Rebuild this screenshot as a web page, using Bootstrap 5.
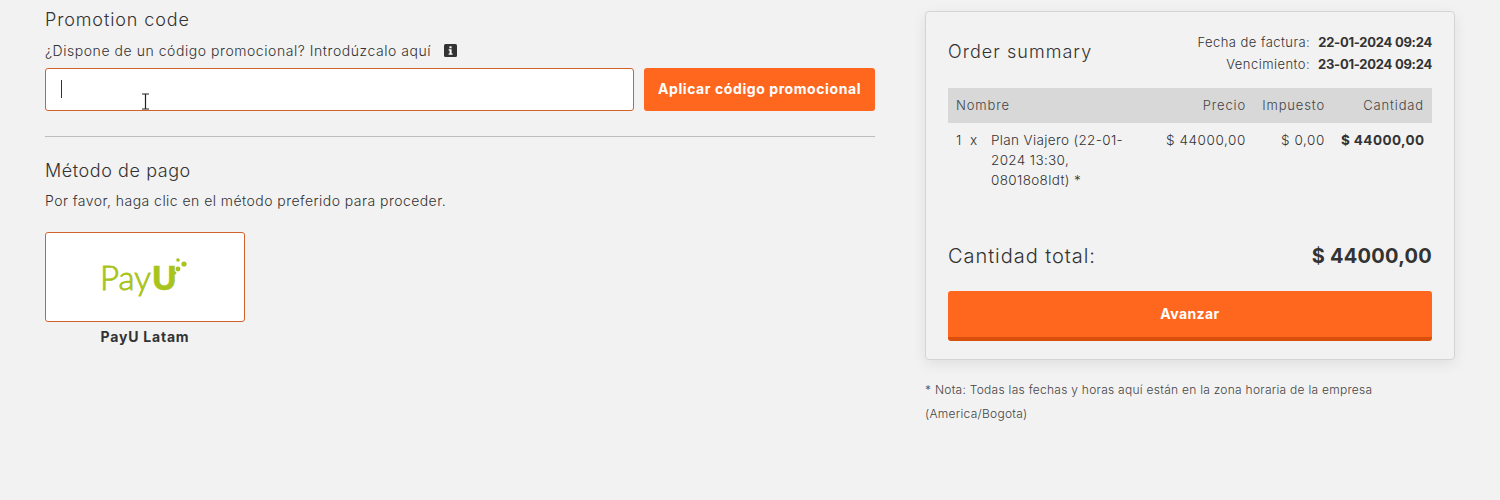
<!DOCTYPE html>
<html lang="es">
<head>
<meta charset="utf-8">
<title>Checkout</title>
<link rel="stylesheet" href="https://cdn.jsdelivr.net/npm/bootstrap@5.3.0/dist/css/bootstrap.min.css">
<style>
body{background:#f2f2f2;color:#333;font-family:"Inter","Noto Sans",sans-serif;font-weight:300;font-size:14px;overflow:hidden;height:500px}
.shell{display:flex;gap:50px;padding:0 45px}
.main-col{width:830px;flex:none}
.side-col{width:530px;flex:none;padding-top:11px}
.sec-title{font-size:18px;line-height:24px;font-weight:300;margin:0;padding-top:8px;letter-spacing:.88px}
.sec-help{font-size:14px;line-height:20px;margin:0;letter-spacing:.45px}
.promo-help{margin-top:9px;letter-spacing:.55px}
.info-ico{width:13px;height:13px;margin-left:8px;vertical-align:-1px}
.promo-row{display:flex;gap:10px;margin-top:7px}
.promo-wrap{position:relative;flex:1}
.promo-input{height:43px;border:1px solid #d2622a;border-radius:3px;background:#fff}
.caret-mark{position:absolute;left:16px;top:12px;width:1px;height:18px;background:#333}
.ibeam{position:absolute;left:96px;top:25px;width:9px;height:17px}
.promo-btn{width:231px;height:43px;background:#ff671f;border:0;border-radius:3px;color:#fff;font-size:14px;font-weight:700;padding:0 0 3px;white-space:nowrap;letter-spacing:.58px}
.promo-btn:hover{background:#ff671f;color:#fff}
.divider{border:0;border-top:1px solid #bdbdbd;opacity:1;margin:25px 0 22px}
.pay-title{padding-top:0;letter-spacing:.57px}
.pay-help{margin-top:8px}
.pay-tile{width:200px;height:90px;background:#fff;border:1px solid #d2622a;border-radius:3px;margin-top:21px;display:flex;align-items:center;justify-content:center}
.pay-name{width:200px;text-align:center;font-weight:700;font-size:14px;line-height:20px;margin-top:5px;letter-spacing:.8px}
.sum-card{height:349px;background:#f2f2f2;border:1px solid #d4d4d4;border-radius:4px;box-shadow:0 4px 14px rgba(0,0,0,.08);padding:19px 22px 0}
.sum-head{display:flex;justify-content:space-between;height:57px}
.sum-title{font-size:18px;font-weight:300;margin:0;line-height:42px;letter-spacing:1.05px}
.date-line{display:flex;justify-content:flex-end;gap:8px;font-size:13px;line-height:22px;letter-spacing:.45px}
.date-line b{font-weight:700;letter-spacing:-.25px}
.sum-table{table-layout:fixed;width:484px;font-size:14px;margin:0;--bs-table-bg:transparent;--bs-table-color:#333}
.sum-table th{background:#d8d8d8;font-weight:300;font-size:13px;height:35px;padding:0 8px;vertical-align:middle;border:0;color:#444;letter-spacing:.85px}
.sum-table td{padding:7px 8px;border:0;line-height:20px;font-size:13.5px;vertical-align:top;letter-spacing:.35px}
.sum-table td.num-cell{letter-spacing:.6px}
.sum-table td.sum-strong{letter-spacing:.4px;font-weight:700}
.qty-cell{display:flex;gap:0}
.qty-val{width:35px;flex:none}
.total-line{display:flex;justify-content:space-between;align-items:center;height:30px;margin-top:44px;font-size:20px;letter-spacing:.95px}
.total-line b{font-weight:700;letter-spacing:.25px}
.go-btn{display:block;width:100%;height:50px;margin-top:20px;background:#ff671f;border:0;border-bottom:4px solid #d9500c;border-radius:3px;color:#fff;font-size:14px;font-weight:700;padding:0 0 2px;letter-spacing:.4px}
.go-btn:hover{background:#ff671f;color:#fff;border-bottom-color:#d9500c}
.sum-note{font-size:12px;line-height:24px;margin:18px 0 0;color:#444;letter-spacing:.27px}
</style>
</head>
<body>
<div class="shell">
  <div class="main-col">
    <h5 class="sec-title">Promotion code</h5>
    <p class="sec-help promo-help">¿Dispone de un código promocional? Introdúzcalo aquí
      <svg class="info-ico" viewBox="0 0 13 13"><rect width="13" height="13" rx="1.5" fill="#333"/><rect x="5.4" y="2.3" width="2.2" height="2" fill="#fff"/><path d="M4.6 5.3h3v4.3h1v1.2H4.6V9.6h1V6.5h-1z" fill="#fff"/></svg></p>
    <div class="promo-row">
      <div class="promo-wrap">
        <div class="promo-input"></div>
        <span class="caret-mark"></span>
        <svg class="ibeam" viewBox="0 0 9 17"><path d="M1 1h7M1 16h7M4.5 1v15" stroke="#222" stroke-width="1.2" fill="none"/></svg>
      </div>
      <button class="btn promo-btn" type="button">Aplicar código promocional</button>
    </div>
    <hr class="divider">
    <h5 class="sec-title pay-title">Método de pago</h5>
    <p class="sec-help pay-help">Por favor, haga clic en el método preferido para proceder.</p>
    <div class="pay-tile">
      <svg width="90" height="50" viewBox="0 0 90 50">
        <text x="0" y="38" font-family="Lato,sans-serif" font-size="33" fill="#a8c41a" stroke="#a8c41a" stroke-width=".9">Pay</text>
        <text x="52" y="38" font-family="Lato,sans-serif" font-size="33" font-weight="900" fill="#a8c41a" stroke="#a8c41a" stroke-width=".7">U</text>
        <circle cx="78" cy="17" r="2.4" fill="#a8c41a"/><circle cx="84" cy="12" r="2.6" fill="#a8c41a"/><circle cx="78" cy="8" r="1.8" fill="#a8c41a"/><circle cx="75" cy="21" r="1.4" fill="#a8c41a"/>
      </svg>
    </div>
    <div class="pay-name">PayU Latam</div>
  </div>
  <div class="side-col">
    <div class="sum-card">
      <div class="sum-head">
        <h5 class="sum-title">Order summary</h5>
        <div>
          <div class="date-line"><span>Fecha de factura:</span><b>22-01-2024 09:24</b></div>
          <div class="date-line"><span>Vencimiento:</span><b>23-01-2024 09:24</b></div>
        </div>
      </div>
      <table class="table sum-table">
        <colgroup><col style="width:190px"><col style="width:116px"><col style="width:79px"><col style="width:99px"></colgroup>
        <thead><tr><th>Nombre</th><th class="text-end">Precio</th><th class="text-end">Impuesto</th><th class="text-end">Cantidad</th></tr></thead>
        <tbody><tr>
          <td><div class="qty-cell"><span class="qty-val">1&nbsp; x</span><span>Plan Viajero (22-01-2024 13:30, 08018o8ldt) *</span></div></td>
          <td class="text-end text-nowrap num-cell">$ 44000,00</td>
          <td class="text-end text-nowrap num-cell">$ 0,00</td>
          <td class="text-end text-nowrap sum-strong">$ 44000,00</td>
        </tr></tbody>
      </table>
      <div class="total-line"><span>Cantidad total:</span><b>$ 44000,00</b></div>
      <button class="btn go-btn" type="button">Avanzar</button>
    </div>
    <p class="sum-note">* Nota: Todas las fechas y horas aquí están en la zona horaria de la empresa (America/Bogota)</p>
  </div>
</div>
<script src="https://cdn.jsdelivr.net/npm/bootstrap@5.3.0/dist/js/bootstrap.bundle.min.js"></script>
</body>
</html>
